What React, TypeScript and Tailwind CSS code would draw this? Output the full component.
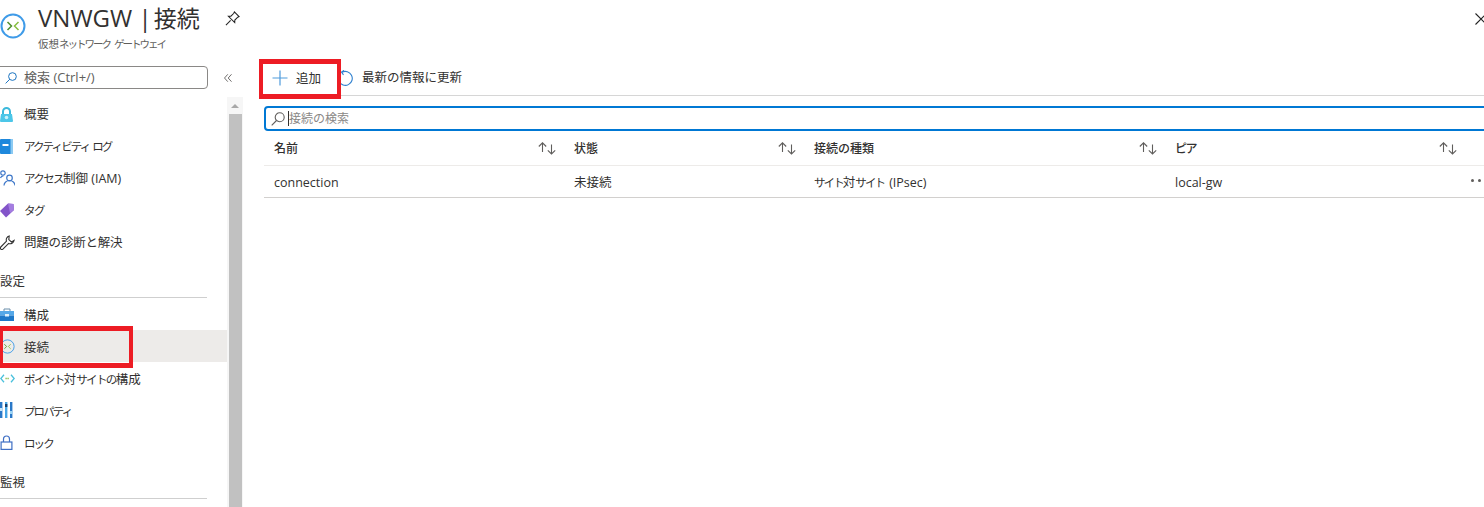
import React from "react";

const FONT = '"Open Sans", "Noto Sans CJK JP", sans-serif';

function Kana({ children, wide }: { children: React.ReactNode; wide?: boolean }) {
  return <span className={wide ? "text-[11.5px] tracking-[-1.6px]" : "text-[11.5px] tracking-[-1.9px]"}>{children}</span>;
}

function GatewayIcon({ size = 26, stroke = 2 }: { size?: number; stroke?: number }) {
  return (
    <svg width={size} height={size} viewBox="0 0 26 26" fill="none">
      <circle cx="13" cy="13" r="11.5" stroke="#3f9be8" strokeWidth={stroke} />
      <path d="M7.5 9 L11.5 13 L7.5 17" stroke="#4f8f2c" strokeWidth="1.5" />
      <path d="M18.5 9 L14.5 13 L18.5 17" stroke="#86bd3f" strokeWidth="1.5" />
    </svg>
  );
}

function Overview() {
  return (
    <svg width="13" height="15" viewBox="0 0 13 15">
      <path d="M3 7 V4.5 a3.5 3.5 0 0 1 7 0 V7" fill="none" stroke="#3bb9dc" strokeWidth="2" />
      <path d="M1 7 H12 L13 14 a1 1 0 0 1 -1 1 H1 a1 1 0 0 1 -1 -1 Z" fill="#4cc6e8" />
      <circle cx="6.5" cy="10.5" r="1.8" fill="#c9f1fb" />
    </svg>
  );
}

function ActivityLog() {
  return (
    <svg width="13" height="15" viewBox="0 0 13 15">
      <rect width="13" height="15" rx="1" fill="#1e88dc" />
      <rect x="2.5" y="5" width="6" height="2" fill="#ffffff" />
      <rect x="10.5" y="0" width="2.5" height="15" fill="#8ccaf2" />
    </svg>
  );
}

function Iam() {
  return (
    <svg width="15" height="16" viewBox="0 0 15 16" fill="none" stroke="#3f78c9" strokeWidth="1.2">
      <circle cx="3" cy="3" r="2.2" />
      <circle cx="9.5" cy="8" r="2.8" />
      <path d="M4 15.5 a5.5 5 0 0 1 11 0" />
      <path d="M0.5 8 a3 3 0 0 1 3 -2" />
    </svg>
  );
}

function Tag() {
  return (
    <svg width="14" height="15" viewBox="0 0 14 15">
      <path d="M0 8 L8 0.5 L13.5 1 L14 7 L6 14.5 Z" fill="#8354c9" />
      <path d="M8 0.5 L13.5 1 L14 7 L10 10 Z" fill="#a47de0" />
    </svg>
  );
}

function Wrench() {
  return (
    <svg width="15" height="15" viewBox="0 0 15 15" fill="none" stroke="#333" strokeWidth="1.1">
      <path d="M9.2 1 a4 4 0 0 0 -2.7 5.2 L0.8 12 a1.4 1.4 0 0 0 2.1 2.1 L8.7 8.4 a4 4 0 0 0 5.4 -3 L11.5 7 L8.8 4.6 Z" />
    </svg>
  );
}

function Briefcase() {
  return (
    <svg width="14" height="13" viewBox="0 0 14 13">
      <path d="M4 3 V1 H10 V3" fill="none" stroke="#6b8eaa" strokeWidth="1" />
      <rect y="3" width="14" height="4.5" fill="#55a8e8" />
      <rect y="7.5" width="14" height="5.5" fill="#1e78c8" />
      <rect x="5" y="6" width="4" height="2.5" fill="#dff1fc" />
    </svg>
  );
}

function P2S() {
  return (
    <svg width="15" height="9" viewBox="0 0 15 9" fill="none" strokeWidth="1.3">
      <path d="M4 0.8 L0.8 4.5 L4 8.2" stroke="#48c0dc" />
      <path d="M11 0.8 L14.2 4.5 L11 8.2" stroke="#48c0dc" />
      <path d="M5.5 4.5 H9.5" stroke="#7bb33a" strokeDasharray="1.2 0.8" />
    </svg>
  );
}

function Props() {
  return (
    <svg width="13" height="16" viewBox="0 0 13 16">
      <rect x="0" width="2.4" height="16" fill="#2a78c8" />
      <rect x="5" width="2.4" height="16" fill="#46a6e6" />
      <rect x="10" width="2.4" height="16" fill="#2a78c8" />
      <rect x="0" y="6" width="2.4" height="3" fill="#c6e6fa" />
      <rect x="5" y="2" width="2.4" height="3" fill="#163f6e" />
      <rect x="10" y="9" width="2.4" height="3" fill="#9bd4f5" />
    </svg>
  );
}

function Lock() {
  return (
    <svg width="13" height="15" viewBox="0 0 13 15" fill="none" stroke="#3f6fc4" strokeWidth="1.2">
      <path d="M3.5 7 V4 a3 3 0 0 1 6 0 V7" />
      <rect x="1.1" y="7" width="10.8" height="7.4" />
    </svg>
  );
}

function SearchGlyph({ size = 13, color = "#0f6cbd" }: { size?: number; color?: string }) {
  return (
    <svg width={size} height={size} viewBox="0 0 14 14" fill="none" stroke={color} strokeWidth="1.1">
      <circle cx="8.7" cy="5.3" r="4.5" />
      <path d="M5.5 8.5 L0.7 13.3" />
    </svg>
  );
}

function SortIcon() {
  return (
    <svg width="18" height="13" viewBox="0 0 18 13" fill="none" stroke="#605e5c" strokeWidth="1.1">
      <path d="M4.5 10 V0.8 M0.8 4.5 L4.5 0.8 L8.2 4.5" />
      <path d="M13.5 2.5 V12 M9.8 8.3 L13.5 12 L17.2 8.3" />
    </svg>
  );
}

function NavRow({
  label,
  icon,
  active,
  low,
}: {
  label: React.ReactNode;
  icon: React.ReactNode;
  active?: boolean;
  low?: boolean;
}) {
  return (
    <div className={`flex h-8 items-center ${active ? "bg-[#edebe9]" : ""}`}>
      <div className="flex w-6 shrink-0 items-center pr-2">{icon}</div>
      <span className={`whitespace-nowrap text-[12.5px] text-[#323130] ${low ? "mt-[4px]" : "mt-[2px]"}`}>{label}</span>
    </div>
  );
}

function SectionLabel({ label, className }: { label: string; className: string }) {
  return (
    <div className={`mr-[20px] border-b border-[#cfcfcf] pb-[6px] text-[12.5px] leading-[18px] text-[#323130] ${className}`}>
      {label}
    </div>
  );
}

const columns: { label: React.ReactNode; width: string; pr: string; value: React.ReactNode }[] = [
  { label: "名前", width: "w-[300px]", pr: "pr-[8px]", value: "connection" },
  { label: "状態", width: "w-[240px]", pr: "pr-[8px]", value: "未接続" },
  {
    label: "接続の種類",
    width: "w-[361px]",
    pr: "pr-[8px]",
    value: (
      <>
        <Kana>サイト</Kana>対<Kana>サイト</Kana>
        <span className="ml-[5px]">(IPsec)</span>
      </>
    ),
  },
  { label: <span className="tracking-[-1.5px]">ピア</span>, width: "w-[319px]", pr: "pr-[27px]", value: "local-gw" },
];

export default function App() {
  return (
    <div className="relative h-[507px] w-[1484px] overflow-hidden bg-white" style={{ fontFamily: FONT }}>
      {/* Header */}
      <header className="flex h-[66px] items-start">
        <div className="pt-[13px]">
          <GatewayIcon />
        </div>
        <div className="ml-[12px] flex flex-col">
          <div className="flex items-center">
            <h1 className="whitespace-nowrap text-[24px] leading-[36px] text-[#323130]">
              VNWGW | <span className="ml-[-4px] text-[23px]">接続</span>
            </h1>
            <svg className="ml-[25px]" width="15" height="15" viewBox="0 0 16 16" fill="none" stroke="#222" strokeWidth="1.1">
              <path d="M10 1 L15 6 L13.6 6.6 L10.5 9.7 L10.4 12.4 L3.6 5.6 L6.3 5.5 L9.4 2.4 Z" />
              <path d="M6 10 L1 15" />
            </svg>
          </div>
          <div className="mt-[1px] whitespace-nowrap text-[10.5px] leading-[14px] text-[#605e5c]">
            仮想<span className="tracking-[-2px]">ネットワーク</span>
            <span className="ml-[4px] tracking-[-2px]">ゲートウェイ</span>
          </div>
        </div>
        <svg className="ml-auto mr-[-3px] mt-[13px]" width="12" height="12" viewBox="0 0 12 12" stroke="#222" strokeWidth="1.1">
          <path d="M0.5 0.5 L11.5 11.5 M11.5 0.5 L0.5 11.5" />
        </svg>
      </header>

      <div className="flex h-[441px]">
        {/* Sidebar */}
        <aside className="flex w-[243px] shrink-0">
          <div className="w-[227px] shrink-0">
            <div className="flex h-[32px] items-start">
              <div className="ml-[-4px] flex h-[23px] w-[212px] shrink-0 items-center rounded-sm border border-[#8a8886] pl-[8px]">
                <SearchGlyph size={12} />
                <span className="ml-[7px] text-[13px] text-[#605e5c]">検索 (Ctrl+/)</span>
              </div>
              <svg className="ml-[16px] mt-[8px] shrink-0" width="8" height="8" viewBox="0 0 8 8" fill="none" stroke="#605e5c" strokeWidth="0.9">
                <path d="M3.8 0.3 L0.5 4 L3.8 7.7 M7.5 0.3 L4.2 4 L7.5 7.7" />
              </svg>
            </div>
            <NavRow label="概要" icon={<Overview />} />
            <NavRow
              label={
                <>
                  <Kana>アクティビティ</Kana>
                  <span className="ml-[3px]">
                    <Kana>ログ</Kana>
                  </span>
                </>
              }
              icon={<ActivityLog />}
            />
            <NavRow
              label={
                <>
                  <Kana wide>アクセス</Kana>制御 (IAM)
                </>
              }
              icon={<Iam />}
            />
            <NavRow label={<Kana wide>タグ</Kana>} icon={<Tag />} />
            <NavRow label={<span className="tracking-[-0.2px]">問題の診断と解決</span>} icon={<Wrench />} />
            <SectionLabel label="設定" className="mt-[15px]" />
            <NavRow label="構成" icon={<Briefcase />} low />
            <NavRow label="接続" icon={<GatewayIcon size={15} stroke={1.6} />} active low />
            <NavRow
              label={
                <>
                  <Kana wide>ポイント</Kana>対<Kana wide>サイトの</Kana>構成
                </>
              }
              icon={<P2S />}
              low
            />
            <NavRow label={<Kana>プロパティ</Kana>} icon={<Props />} low />
            <NavRow label={<Kana>ロック</Kana>} icon={<Lock />} low />
            <SectionLabel label="監視" className="mt-[16px]" />
          </div>
          <div className="mt-[31px] flex w-[16px] flex-col items-center bg-[#f6f6f6]">
            <div className="flex h-[17px] w-full items-center justify-center">
              <div className="h-0 w-0 border-x-[4px] border-b-[4px] border-x-transparent border-b-[#a8a8a8]" />
            </div>
            <div className="ml-[1px] w-[13px] flex-1 bg-[#c1c1c1]" />
          </div>
        </aside>

        {/* Main */}
        <main className="ml-[21px] flex-1 overflow-hidden">
          <div className="flex h-[30px] items-center border-b border-[#d6d6d6] pb-[6px] pt-[1px]">
            <svg className="ml-[8px]" width="16" height="16" viewBox="0 0 16 16" stroke="#4f9bdc" strokeWidth="1.2">
              <path d="M8 0.5 V15.5 M0.5 8 H15.5" />
            </svg>
            <span className="ml-[8px] mt-[2px] text-[12.5px] text-[#323130]">追加</span>
            <svg className="ml-[17px]" width="15" height="16" viewBox="0 0 15 16" fill="none" stroke="#2f80cf" strokeWidth="1.1">
              <path d="M4 2.2 A7 7 0 1 1 1 11.5" />
              <path d="M6 0.3 L3.5 2.2 L5.5 4.8" />
            </svg>
            <span className="ml-[9px] mt-[1px] text-[12.5px] text-[#323130]">最新の情報に更新</span>
          </div>
          <div className="mt-[10px] flex h-[25px] w-[1240px] items-center rounded-sm border-2 border-[#0078d4] pl-[5px]">
            <SearchGlyph size={14} color="#605e5c" />
            <div className="ml-[3px] h-[15px] w-px bg-[#323130]" />
            <span className="text-xs text-[#8a8886]">接続の検索</span>
          </div>
          <div className="flex h-[35px] w-[1220px] items-center border-b border-[#edebe9]">
            {columns.map((c, i) => (
              <div key={i} className={`flex items-center justify-between pl-[10px] ${c.pr} ${c.width}`}>
                <span className="mt-[2px] text-xs font-medium text-[#323130]">{c.label}</span>
                <SortIcon />
              </div>
            ))}
          </div>
          <div className="relative flex h-[32px] w-[1220px] items-center border-b border-[#d2d0ce]">
            {columns.map((c, i) => (
              <div key={i} className={`mt-[4px] whitespace-nowrap pl-[10px] text-[12.5px] text-[#323130] ${c.width}`}>
                {c.value}
              </div>
            ))}
            <div className="absolute left-[1207px] top-[13px] flex gap-[4px]">
              <span className="h-[3px] w-[3px] rounded-full bg-[#605e5c]" />
              <span className="h-[3px] w-[3px] rounded-full bg-[#605e5c]" />
              <span className="h-[3px] w-[3px] rounded-full bg-[#605e5c]" />
            </div>
          </div>
        </main>
      </div>

      {/* Red annotation boxes */}
      <div className="pointer-events-none absolute left-[-1px] top-[326px] h-[42px] w-[134px] border-x-4 border-y-[5px] border-[#ed1c24]" />
      <div className="pointer-events-none absolute left-[259px] top-[59px] h-[40px] w-[82px] border-x-4 border-y-[5px] border-[#ed1c24]" />
    </div>
  );
}
